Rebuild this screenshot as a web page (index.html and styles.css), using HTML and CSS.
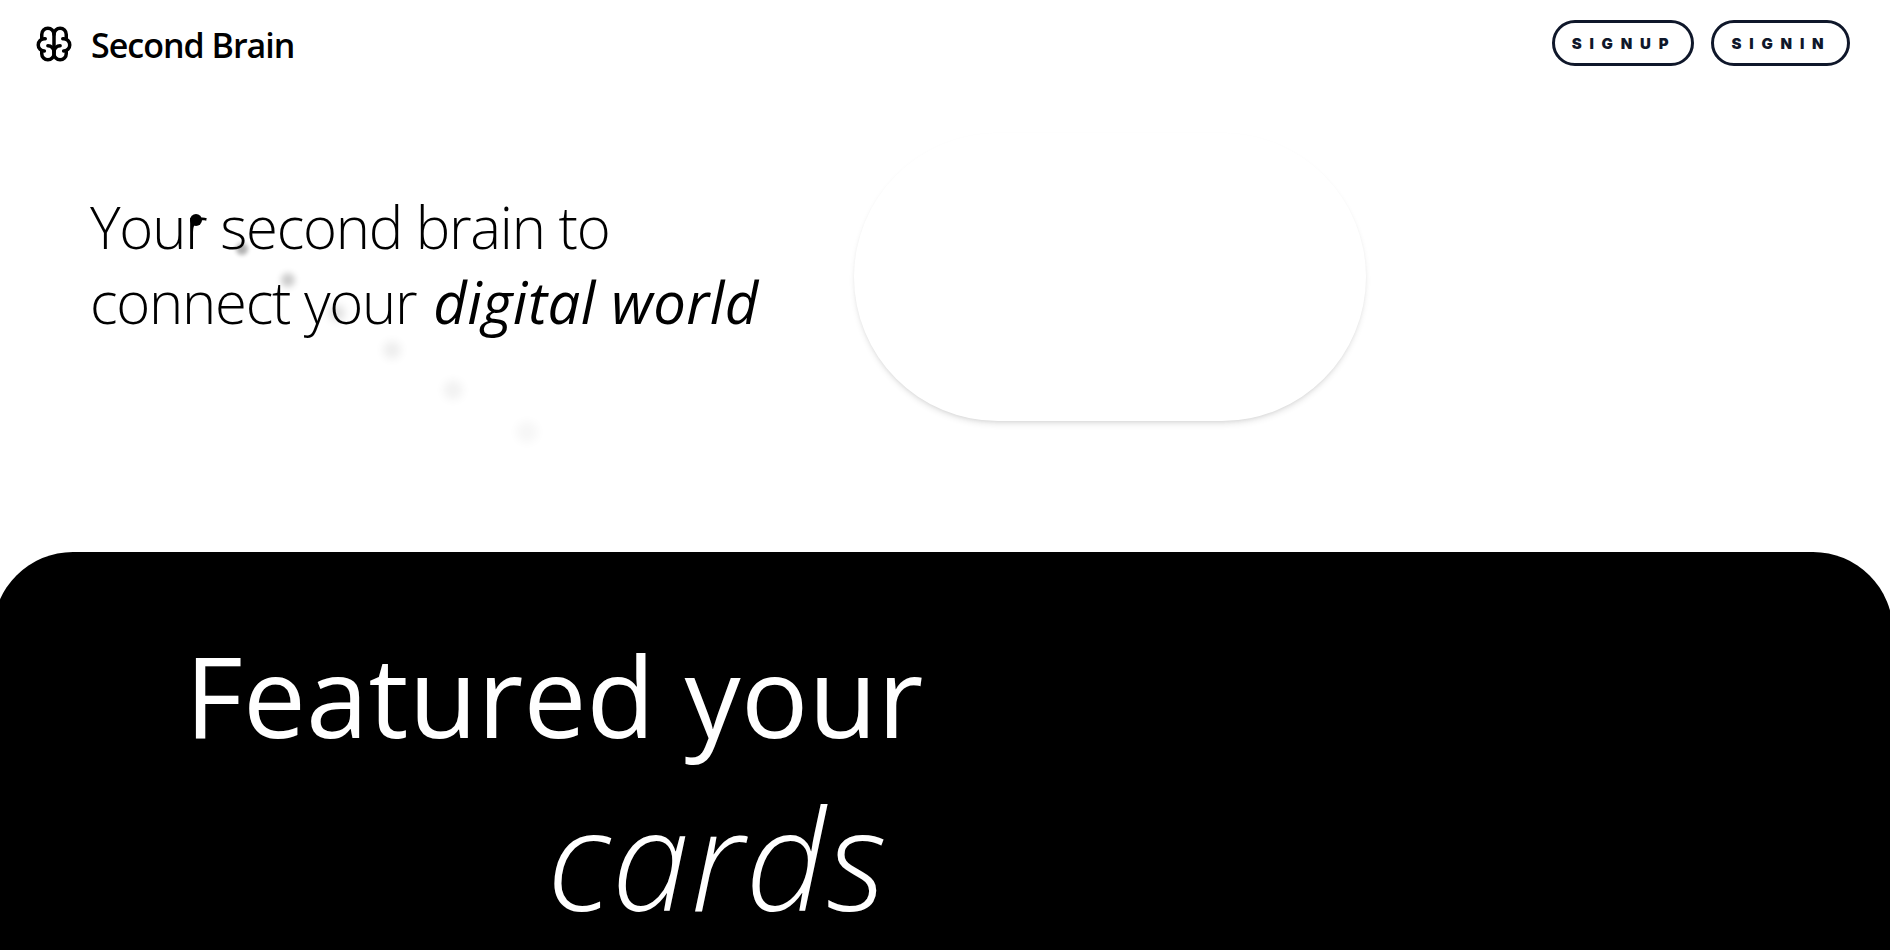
FILE: index.html
```html
<!DOCTYPE html>
<html lang="en">
<head>
<meta charset="utf-8">
<title>Second Brain</title>
<link rel="stylesheet" href="styles.css">
</head>
<body>
<header class="topbar">
  <a class="brand">
    <svg class="brand-icon" viewBox="0 0 24 24" fill="none" stroke="currentColor" stroke-width="2" stroke-linecap="round" stroke-linejoin="round">
      <path d="M15.5 13a3.5 3.5 0 0 0 -3.5 3.5v1a3.5 3.5 0 0 0 7 0v-1.8"/>
      <path d="M8.5 13a3.5 3.5 0 0 1 3.5 3.5v1a3.5 3.5 0 0 1 -7 0v-1.8"/>
      <path d="M17.5 16a3.5 3.5 0 0 0 0 -7h-.5"/>
      <path d="M19 9.3v-2.8a3.5 3.5 0 0 0 -7 0"/>
      <path d="M6.5 16a3.5 3.5 0 0 1 0 -7h.5"/>
      <path d="M5 9.3v-2.8a3.5 3.5 0 0 1 7 0v10"/>
    </svg>
    <span class="brand-name">Second Brain</span>
  </a>
  <nav class="auth">
    <button class="pill pill-up">SIGNUP</button>
    <button class="pill pill-in">SIGNIN</button>
  </nav>
</header>
<main>
  <section class="hero">
    <h1 class="hero-title">Your second brain to<br>connect your <em>digital world</em></h1>
    <div class="hero-card"></div>
  </section>
  <section class="featured">
    <h2 class="featured-title">Featured your</h2>
    <p class="featured-sub">cards</p>
  </section>
</main>
<div class="trail t1"></div>
<div class="trail t2"></div>
<div class="trail t3"></div>
<div class="trail t4"></div>
<div class="trail t5"></div>
<div class="trail t6"></div>
<div class="trail t7"></div>
</body>
</html>
```
FILE: styles.css
```css
* { box-sizing: border-box; }
html, body { height: 100%; }
body {
  margin: 0;
  background: #fff;
  color: #000;
  font-family: "Open Sans", "Noto Sans", sans-serif;
  overflow: hidden;
}
.topbar {
  height: 88px;
  padding: 20px 40px 20px 33px;
  display: flex;
  justify-content: space-between;
  align-items: flex-start;
}
.brand { display: flex; align-items: center; gap: 16px; padding-top: 2px; }
.brand-icon { width: 42px; height: 42px; display: block; }
.brand-name { font-size: 34px; font-weight: 600; letter-spacing: -1px; line-height: 42px; padding-top: 2px; }
.auth { display: flex; gap: 17px; }
.pill {
  height: 46px;
  padding: 0 14px 0 16px;
  border: 3px solid #0f172a;
  border-radius: 23px;
  background: #fff;
  color: #0f172a;
  font-family: "Inter", sans-serif;
  font-weight: 900;
  font-size: 15px;
  letter-spacing: 7.8px;
}
.pill-up { width: 142px; }
.pill-in { width: 139px; }
.hero {
  height: 464px;
  padding: 45px 0 0 90px;
  display: flex;
  align-items: flex-start;
}
.hero-title {
  flex: none;
  margin: 56px 0 0;
  width: 764px;
  font-size: 58px;
  line-height: 75px;
  font-weight: 300;
  letter-spacing: -1.25px;
}
.hero-title em { font-weight: 400; letter-spacing: .45px; margin-left: 3px; }
.hero-card {
  flex: none;
  width: 512px;
  height: 288px;
  border-radius: 144px;
  background: #fff;
  box-shadow: 0 4px 6px -1px rgba(0,0,0,.1), 0 2px 4px -2px rgba(0,0,0,.1);
}
.featured {
  height: 420px;
  margin: 0 -3px 0 -7px;
  padding: 0 0 0 192px;
  background: #000;
  color: #fff;
  border-radius: 80px 80px 0 0;
}
.featured-title {
  margin: 0;
  padding-top: 68px;
  font-size: 112px;
  line-height: 150px;
  font-weight: 400;
  letter-spacing: .2px;
}
.featured-sub {
  margin: 0;
  padding-left: 362px;
  font-size: 140px;
  line-height: 173px;
  font-weight: 300;
  font-style: italic;
  letter-spacing: 1.4px;
}
.trail { position: absolute; border-radius: 50%; background: #000; }
.t1 { left: 190px; top: 214px; width: 12px; height: 12px; }
.t2 { left: 236px; top: 243px; width: 12px; height: 12px; opacity: .3; filter: blur(2px); }
.t3 { left: 281px; top: 273px; width: 14px; height: 14px; opacity: .2; filter: blur(3px); }
.t4 { left: 329px; top: 305px; width: 16px; height: 16px; opacity: .12; filter: blur(4px); }
.t5 { left: 383px; top: 341px; width: 18px; height: 18px; opacity: .07; filter: blur(5px); }
.t6 { left: 443px; top: 380px; width: 20px; height: 20px; opacity: .05; filter: blur(5px); }
.t7 { left: 516px; top: 421px; width: 22px; height: 22px; opacity: .03; filter: blur(5px); }
```
